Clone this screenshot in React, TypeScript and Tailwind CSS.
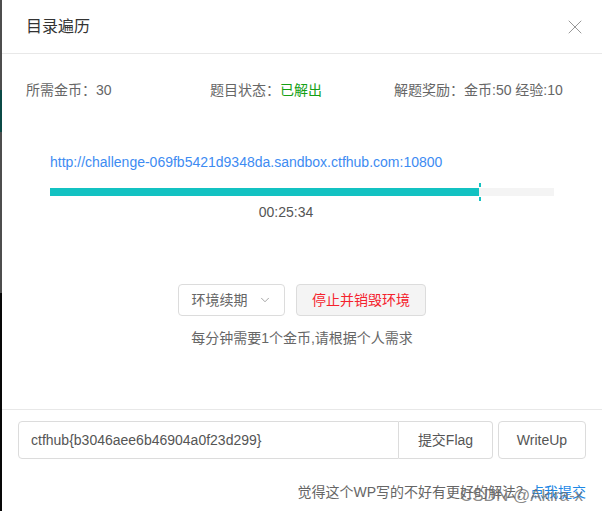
import React from "react";
import { ChevronDown, X } from "lucide-react";

const font = { fontFamily: '"Liberation Sans", "Noto Sans CJK SC", sans-serif' };

export default function App() {
  return (
    <div className="flex w-[602px] h-[511px] overflow-hidden bg-white" style={font}>
      <div className="flex w-[2px] flex-col shrink-0">
        <div className="h-[90px] bg-[#4d4d4d]" />
        <div className="h-[42px] bg-[#0b4a46]" />
        <div className="h-[161px] bg-[#4d4d4d]" />
        <div className="flex-1 bg-[#080808]" />
      </div>
      <div className="relative flex flex-1 flex-col bg-white">
        <div className="flex h-[54px] items-center justify-between border-b border-[#e8e8e8] px-6">
          <span className="text-[16px] text-[#333]">目录遍历</span>
          <X size={24} strokeWidth={0.9} className="mr-[-9px] text-[#8c8c8c]" />
        </div>
        <div className="flex flex-col pt-[26px]">
          <div className="grid grid-cols-3 px-6 text-[14px] leading-[20px] text-[#666]">
            <span>所需金币：30</span>
            <span>
              题目状态：<span className="text-[#16a016]">已解出</span>
            </span>
            <span className="whitespace-nowrap">解题奖励：金币:50 经验:10</span>
          </div>
          <div className="mt-[52px] px-12">
            <div className="text-[14px] leading-[20px] text-[#3d8bf2]">
              http://challenge-069fb5421d9348da.sandbox.ctfhub.com:10800
            </div>
            <div className="relative mt-4 flex h-2 w-full bg-[#f4f4f4]">
              <div className="h-2 w-[429px] bg-[#13c2c2]" />
              <div className="absolute left-[429px] top-[-5px] h-[4px] w-[2px] bg-[#13c2c2]" />
              <div className="absolute left-[429px] top-[9px] h-[4px] w-[2px] bg-[#13c2c2]" />
            </div>
            <div className="mt-[6px] pr-8 text-center text-[14px] leading-[20px] text-[#555]">00:25:34</div>
          </div>
          <div className="mt-[62px] flex justify-center gap-[11px]">
            <button className="flex h-[32px] w-[107px] items-center justify-center gap-[10px] rounded-[4px] border border-[#dcdcdc] bg-white text-[14px] text-[#666]">
              环境续期
              <ChevronDown size={14} strokeWidth={1.3} className="text-[#888]" />
            </button>
            <button className="flex h-[32px] w-[130px] items-center justify-center rounded-[4px] border border-[#dcdcdc] bg-[#f4f4f4] text-[14px] text-[#f5222d]">
              停止并销毁环境
            </button>
          </div>
          <div className="mt-3 text-center text-[14px] leading-[20px] text-[#666]">每分钟需要1个金币,请根据个人需求</div>
        </div>
        <div className="mt-[61px] border-t border-[#e8e8e8] px-4 pt-[11px]">
          <div className="flex h-[38px] gap-[5px]">
            <div className="flex flex-1">
              <div className="flex flex-1 items-center rounded-l-[4px] border border-[#dcdcdc] pl-3 text-[14px] text-[#555]">
                ctfhub{"{"}b3046aee6b46904a0f23d299{"}"}
              </div>
              <button className="w-[94px] rounded-r-[4px] border border-l-0 border-[#dcdcdc] bg-white text-[14px] text-[#555]">
                提交Flag
              </button>
            </div>
            <button className="w-[88px] rounded-[4px] border border-[#dcdcdc] bg-white text-[14px] text-[#555]">WriteUp</button>
          </div>
          <div className="mt-[23px] text-right text-[14px] leading-[20px] text-[#666]">
            觉得这个WP写的不好有更好的解法？<span className="text-[#1e88e5]">点我提交</span>
          </div>
        </div>
        <div className="pointer-events-none absolute left-[458px] top-[486px] whitespace-nowrap text-[17px] leading-[20px] text-[#6a6a6a]/80">
          CSDN @Akira-x
        </div>
      </div>
    </div>
  );
}
